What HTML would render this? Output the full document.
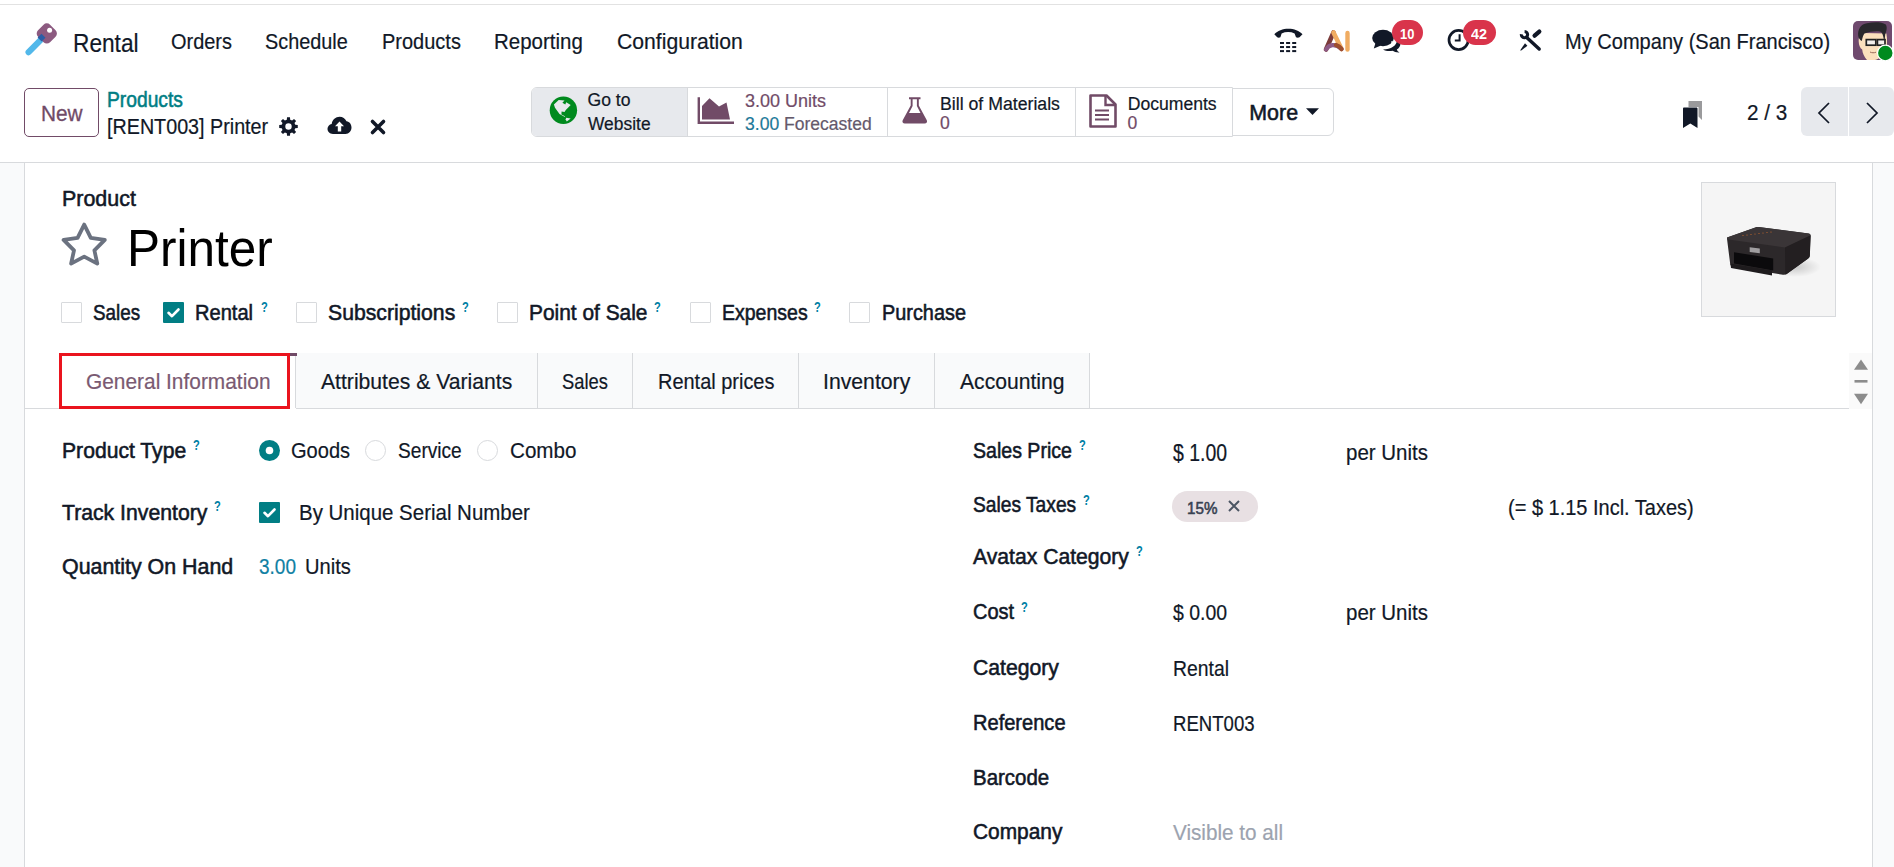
<!DOCTYPE html>
<html><head><meta charset="utf-8"><title>Printer - Rental</title>
<style>
html,body{margin:0;padding:0;background:#fff;}
body{width:1894px;height:867px;position:relative;overflow:hidden;font-family:"Liberation Sans",sans-serif;}
.t{position:absolute;white-space:pre;}
svg{overflow:visible}
</style></head><body>
<div style="position:absolute;left:0px;top:4px;width:1894px;height:1px;background:#E2E2E2"></div>
<div style="position:absolute;left:0px;top:162px;width:1894px;height:1px;background:#D8DADD"></div>
<div style="position:absolute;left:0px;top:163px;width:24px;height:704px;background:#F9FAFB"></div>
<div style="position:absolute;left:24px;top:163px;width:1px;height:704px;background:#D8DADD"></div>
<div style="position:absolute;left:1872px;top:163px;width:1px;height:704px;background:#D8DADD"></div>
<div style="position:absolute;left:1873px;top:163px;width:21px;height:704px;background:#F9FAFB"></div>
<svg style="position:absolute;left:0px;top:0px;" width="80" height="80" viewBox="0 0 80 80"><line x1="28.6" y1="52.2" x2="41" y2="39.6" stroke="#52B8EA" stroke-width="6.2" stroke-linecap="round"/><rect x="38.3" y="24.9" width="17" height="17" rx="4.6" transform="rotate(45 46.8 33.4)" fill="#8C5A80"/><path d="M37.6 37.5 L41.5 33.8 L45.5 37.8 L41.6 41.6 Z" fill="#2B5EA6"/><circle cx="49.6" cy="30.3" r="2.5" fill="#fff"/></svg>
<div class="t" style="left:72.80px;top:29.86px;font-size:26.02px;line-height:26.02px;transform:scaleX(0.8721);transform-origin:0 0;-webkit-text-stroke:0.20px #111827;color:#111827;">Rental</div>
<div class="t" style="left:171.40px;top:31.87px;font-size:21.40px;line-height:21.40px;transform:scaleX(0.9327);transform-origin:0 0;-webkit-text-stroke:0.20px #111827;color:#111827;">Orders</div>
<div class="t" style="left:265.20px;top:31.87px;font-size:21.40px;line-height:21.40px;transform:scaleX(0.9279);transform-origin:0 0;-webkit-text-stroke:0.20px #111827;color:#111827;">Schedule</div>
<div class="t" style="left:381.60px;top:31.87px;font-size:21.40px;line-height:21.40px;transform:scaleX(0.9343);transform-origin:0 0;-webkit-text-stroke:0.20px #111827;color:#111827;">Products</div>
<div class="t" style="left:494.40px;top:31.87px;font-size:21.40px;line-height:21.40px;transform:scaleX(0.9570);transform-origin:0 0;-webkit-text-stroke:0.20px #111827;color:#111827;">Reporting</div>
<div class="t" style="left:616.50px;top:31.87px;font-size:21.40px;line-height:21.40px;transform:scaleX(0.9891);transform-origin:0 0;-webkit-text-stroke:0.20px #111827;color:#111827;">Configuration</div>
<div class="t" style="left:1564.50px;top:31.57px;font-size:21.40px;line-height:21.40px;transform:scaleX(0.9370);transform-origin:0 0;-webkit-text-stroke:0.20px #111827;color:#111827;">My Company (San Francisco)</div>
<svg style="position:absolute;left:1272px;top:26px;" width="32" height="28" viewBox="0 0 32 28"><path d="M2.3 8.3 C8.5 0.8 24.3 0.8 30.5 8.3 L27.5 11.2 C26.5 11.8 25 11.8 24 11.2 L22.6 7.4 C18.6 5.6 13.6 5.6 9.6 7.4 L8.4 11.2 C7.4 11.8 6 11.8 5.2 11.2 Z" fill="#111827"/><rect x="8.0" y="16.0" width="4" height="2" fill="#111827"/><rect x="8.0" y="20.05" width="4" height="2" fill="#111827"/><rect x="8.0" y="24.1" width="4" height="2" fill="#111827"/><rect x="14.1" y="16.0" width="4" height="2" fill="#111827"/><rect x="14.1" y="20.05" width="4" height="2" fill="#111827"/><rect x="14.1" y="24.1" width="4" height="2" fill="#111827"/><rect x="20.2" y="16.0" width="4" height="2" fill="#111827"/><rect x="20.2" y="20.05" width="4" height="2" fill="#111827"/><rect x="20.2" y="24.1" width="4" height="2" fill="#111827"/></svg>
<svg style="position:absolute;left:1322px;top:29px;" width="30" height="24" viewBox="0 0 30 24"><path d="M4 20.5 L11.5 3.5" stroke="#7B3B3A" stroke-width="4.6" stroke-linecap="round"/><path d="M11.5 3.5 L19.5 20" stroke="#F0AC62" stroke-width="4.6" stroke-linecap="round"/><path d="M4 20.5 C7 15.5 13 14 19.5 20" stroke="#8E5B86" stroke-width="4.2" fill="none" stroke-linecap="round"/><path d="M14 16 C16.5 16.8 18 18 19.5 20" stroke="#9E4E2E" stroke-width="4.2" fill="none" stroke-linecap="round"/><line x1="25.5" y1="4" x2="25.5" y2="20.5" stroke="#F0AC62" stroke-width="4.4" stroke-linecap="round"/></svg>
<svg style="position:absolute;left:1370px;top:27px;" width="32" height="27" viewBox="0 0 32 27"><path d="M13 22.5 C 21 22.5 27 18.5 27 13 C 27 12 26.7 11 26.3 10.2 C 29 11.5 30.5 14 30.5 16.5 C 30.5 19 29 21.3 26.8 22.6 C 27.2 23.8 28 24.8 29.5 25.5 C 26.5 25.7 24 24.6 22.5 23.8 C 21.5 24 20.5 24.1 19.5 24.1 C 17 24.1 14.8 23.5 13 22.5 Z" fill="#111827"/><ellipse cx="13" cy="11" rx="10.8" ry="8.3" fill="#111827"/><path d="M5.5 16 L3.8 21.5 L11 18.5 Z" fill="#111827"/><path d="M22 14 C 23 17 20 20 15 21" stroke="#fff" stroke-width="1.4" fill="none"/></svg>
<svg style="position:absolute;left:1445px;top:26px;" width="28" height="28" viewBox="0 0 28 28"><circle cx="13.6" cy="14" r="9.6" fill="none" stroke="#111827" stroke-width="2.7"/><path d="M14.6 8.2 V14.6 H9.8" fill="none" stroke="#111827" stroke-width="2"/></svg>
<div style="position:absolute;left:1391.5px;top:20.2px;width:31.5px;height:25.2px;background:#D9344B;border-radius:13px"></div>
<div class="t" style="left:1400.00px;top:26.00px;font-size:15.12px;line-height:15.12px;transform:scaleX(0.8567);transform-origin:0 0;font-weight:bold;color:#fff;">10</div>
<div style="position:absolute;left:1463px;top:20.2px;width:32.7px;height:25.2px;background:#D9344B;border-radius:13px"></div>
<div class="t" style="left:1471.00px;top:26.00px;font-size:15.12px;line-height:15.12px;transform:scaleX(0.9519);transform-origin:0 0;font-weight:bold;color:#fff;">42</div>
<svg style="position:absolute;left:1514px;top:25px;" width="34" height="32" viewBox="0 0 34 32"><line x1="13" y1="12.8" x2="25.2" y2="24" stroke="#111827" stroke-width="3.4" stroke-linecap="round"/><path d="M7.4 9.2 A3.1 3.1 0 1 0 10.6 6.5" fill="none" stroke="#111827" stroke-width="3.1"/><line x1="20.6" y1="10.6" x2="25.3" y2="6.6" stroke="#111827" stroke-width="4.3" stroke-linecap="round"/><path d="M11.0 18.3 L13.4 20.7 L7.6 25.3 L6.3 25.8 L6.7 24.4 Z" fill="#111827"/></svg>
<svg style="position:absolute;left:1853px;top:21px;" width="39" height="39" viewBox="0 0 39 39"><defs><clipPath id="av"><rect width="39" height="39" rx="5"/></clipPath></defs><g clip-path="url(#av)"><rect width="39" height="39" fill="#6F4A6E"/><path d="M5.7 20.5 C5.5 16 7.5 12.5 10.5 12 L33.4 12.5 C34.5 18 34 24 33.4 28.6 C31 34 27 38 22 39 L14 39 C11 36 9.5 32 9.2 28.6 C7 27 5.8 24 5.7 20.5 Z" fill="#FBE0BD"/><path d="M5.2 15 C4.5 8 8 3 14 2.2 C20 1.2 28 0.5 32.8 3.5 C34.5 6 33.5 10 32.2 13.5 L31.5 21 C30 15 30 11.5 27 10.5 C22 10 17 10.5 11.5 12.5 C10 14 9.5 17 8.8 20 C7 19 5.8 17.5 5.2 15 Z" fill="#29282C"/><rect x="13.3" y="18.6" width="9.5" height="5.6" fill="#F4F0EC" stroke="#222" stroke-width="1.7"/><rect x="24.4" y="18.6" width="7.6" height="5.6" fill="#F4F0EC" stroke="#222" stroke-width="1.7"/><path d="M17 31 C19 32 21 32 23 31.2" stroke="#9A6A5A" stroke-width="1" fill="none"/></g><circle cx="32.3" cy="32" r="7.8" fill="#008A1E" stroke="#fff" stroke-width="1.2"/></svg>
<div style="position:absolute;left:24px;top:88px;width:75px;height:49px;box-sizing:border-box;border:1px solid #714B67;border-radius:5px"></div>
<div class="t" style="left:40.90px;top:103.87px;font-size:21.40px;line-height:21.40px;transform:scaleX(0.9728);transform-origin:0 0;-webkit-text-stroke:0.20px #714B67;color:#714B67;-webkit-text-stroke:0.3px #714B67;">New</div>
<div class="t" style="left:106.70px;top:89.77px;font-size:21.40px;line-height:21.40px;transform:scaleX(0.9000);transform-origin:0 0;-webkit-text-stroke:0.55px #017E84;color:#017E84;">Products</div>
<div class="t" style="left:107.10px;top:116.87px;font-size:21.40px;line-height:21.40px;transform:scaleX(0.9221);transform-origin:0 0;-webkit-text-stroke:0.20px #111827;color:#111827;">[RENT003] Printer</div>
<svg style="position:absolute;left:278px;top:116px;" width="21" height="21" viewBox="0 0 21 21"><path fill="#111827" fill-rule="evenodd" d="M17.29 8.81 L19.78 9.03 L19.78 11.97 L17.29 12.19 L16.50 14.11 L18.10 16.03 L16.03 18.10 L14.11 16.50 L12.19 17.29 L11.97 19.78 L9.03 19.78 L8.81 17.29 L6.89 16.50 L4.97 18.10 L2.90 16.03 L4.50 14.11 L3.71 12.19 L1.22 11.97 L1.22 9.03 L3.71 8.81 L4.50 6.89 L2.90 4.97 L4.97 2.90 L6.89 4.50 L8.81 3.71 L9.03 1.22 L11.97 1.22 L12.19 3.71 L14.11 4.50 L16.03 2.90 L18.10 4.97 L16.50 6.89 Z M7.30 10.50 a3.20 3.20 0 1 0 6.40 0 a3.20 3.20 0 1 0 -6.40 0 Z"/></svg>
<svg style="position:absolute;left:327px;top:116px;" width="25" height="19" viewBox="0 0 25 19"><path d="M6 18 C2.5 18 0.5 15.5 0.5 12.8 C0.5 10.3 2.3 8.3 4.7 7.9 C5.3 3.7 8.6 0.8 12.6 0.8 C15.7 0.8 18.3 2.6 19.5 5.3 C22.6 5.7 24.5 8.3 24.5 11.5 C24.5 15 22 18 18.5 18 Z" fill="#111827"/><path d="M12.5 5.5 L17 10.3 H14.2 V15.5 H10.8 V10.3 H8 Z" fill="#fff"/></svg>
<svg style="position:absolute;left:370px;top:119px;" width="16" height="16" viewBox="0 0 16 16"><path d="M2.5 2.5 L13.5 13.5 M13.5 2.5 L2.5 13.5" stroke="#111827" stroke-width="3.6" stroke-linecap="round"/></svg>
<div style="position:absolute;left:1232px;top:88px;width:102px;height:48px;box-sizing:border-box;border:1px solid #D8DADD;border-radius:0 6px 6px 0;background:#fff"></div>
<div style="position:absolute;left:531px;top:87px;width:702px;height:50px;box-sizing:border-box;border:1px solid #D8DADD;border-radius:6px 0 0 6px;background:#fff"></div>
<div style="position:absolute;left:532px;top:88px;width:156px;height:48px;background:#E7E9ED;border-radius:5px 0 0 5px"></div>
<div style="position:absolute;left:687px;top:88px;width:1px;height:48px;background:#D8DADD"></div>
<div style="position:absolute;left:887px;top:88px;width:1px;height:48px;background:#D8DADD"></div>
<div style="position:absolute;left:1075px;top:88px;width:1px;height:48px;background:#D8DADD"></div>
<svg style="position:absolute;left:545px;top:92px;" width="37" height="36" viewBox="0 0 37 36"><circle cx="18.4" cy="18.3" r="13.7" fill="#008A1E"/><path d="M8.9 12.5 L13.7 8.1 L19.5 8.5 L17.4 10.8 L20.3 12.5 L21.2 10.2 L25.7 12.9 L20.8 17.9 L19.5 19.9 L16.6 19.5 L16.4 22.4 L19.5 24.1 L20.3 25.2 L14.5 22 L10 15.8 Z" fill="#E7E9ED"/><path d="M21.2 25.7 L25.7 26.6 L21.8 29.5 L20.6 27.5 Z" fill="#E7E9ED"/></svg>
<div class="t" style="left:587.50px;top:92.49px;font-size:17.60px;line-height:17.60px;-webkit-text-stroke:0.20px #111827;color:#111827;">Go to</div>
<div class="t" style="left:587.50px;top:115.69px;font-size:17.60px;line-height:17.60px;transform:scaleX(0.9897);transform-origin:0 0;-webkit-text-stroke:0.20px #111827;color:#111827;">Website</div>
<svg style="position:absolute;left:697px;top:96px;" width="38" height="29" viewBox="0 0 38 29"><path d="M1.8 1.2 V26.7 H37" fill="none" stroke="#714B67" stroke-width="2.4"/><path d="M5 23.5 V10 L12.5 2.2 L22 10.5 L29.5 6.5 L33 23.5 Z" fill="#714B67"/></svg>
<div class="t" style="left:745.00px;top:92.69px;font-size:17.60px;line-height:17.60px;transform:scaleX(1.0235);transform-origin:0 0;-webkit-text-stroke:0.20px #714B67;color:#714B67;">3.00 Units</div>
<div class="t" style="left:745.00px;top:116.49px;font-size:17.60px;line-height:17.60px;transform:scaleX(0.9969);transform-origin:0 0;-webkit-text-stroke:0.20px #65596B;color:#65596B;"><span style="color:#0F7FA3">3.00</span> Forecasted</div>
<svg style="position:absolute;left:901px;top:96px;" width="28" height="29" viewBox="0 0 28 29"><path d="M8 1.2 H19.5 V3.3 H17.8 V9.5 L25.8 24.3 C26.6 26 25.6 27.6 23.7 27.6 H3.8 C1.9 27.6 0.9 26 1.7 24.3 L9.7 9.5 V3.3 H8 Z" fill="#714B67"/><path d="M11.6 3.3 H15.9 V10 L19.5 17 H8 L11.6 10 Z" fill="#fff"/></svg>
<div class="t" style="left:940.00px;top:95.79px;font-size:17.60px;line-height:17.60px;transform:scaleX(1.0056);transform-origin:0 0;-webkit-text-stroke:0.20px #111827;color:#111827;">Bill of Materials</div>
<div class="t" style="left:940.00px;top:115.39px;font-size:17.60px;line-height:17.60px;-webkit-text-stroke:0.20px #714B67;color:#714B67;">0</div>
<svg style="position:absolute;left:1088px;top:94px;" width="30" height="34" viewBox="0 0 30 34"><path d="M2.5 1.5 H18.5 L27.5 10.5 V32.5 H2.5 Z" fill="none" stroke="#714B67" stroke-width="2.6" stroke-linejoin="round"/><path d="M17.5 1.8 V11 H27" fill="none" stroke="#714B67" stroke-width="2.4"/><path d="M7 16.5 H21 M7 21 H21 M7 25.5 H21" stroke="#714B67" stroke-width="2.2"/></svg>
<div class="t" style="left:1127.70px;top:95.79px;font-size:17.60px;line-height:17.60px;-webkit-text-stroke:0.20px #111827;color:#111827;">Documents</div>
<div class="t" style="left:1127.50px;top:115.29px;font-size:17.60px;line-height:17.60px;-webkit-text-stroke:0.20px #714B67;color:#714B67;">0</div>
<div class="t" style="left:1249.30px;top:102.87px;font-size:21.40px;line-height:21.40px;-webkit-text-stroke:0.55px #111827;color:#111827;">More</div>
<svg style="position:absolute;left:1305px;top:107px;" width="15" height="9" viewBox="0 0 15 9"><path d="M1 1.2 H14 L7.5 8 Z" fill="#111827"/></svg>
<svg style="position:absolute;left:1682px;top:100px;" width="22" height="29" viewBox="0 0 22 29"><path d="M6.5 1 H20 V20 L16.5 16.5 V7 H6.5 Z" fill="#9A9A9C"/><path d="M1 8.5 C1 8 1.5 7.5 2 7.5 H14.5 C15 7.5 15.5 8 15.5 8.5 V28 L8.3 23.5 L1 28 Z" fill="#111827"/></svg>
<div class="t" style="left:1747.00px;top:103.07px;font-size:21.40px;line-height:21.40px;transform:scaleX(0.9677);transform-origin:0 0;-webkit-text-stroke:0.20px #111827;color:#111827;">2 / 3</div>
<div style="position:absolute;left:1801px;top:87px;width:93px;height:49px;background:#E7E9ED;border-radius:6px"></div>
<div style="position:absolute;left:1848px;top:87px;width:1px;height:49px;background:#fff"></div>
<svg style="position:absolute;left:1815px;top:100px;" width="18" height="26" viewBox="0 0 18 26"><path d="M14 3 L4 13 L14 23" fill="none" stroke="#111827" stroke-width="1.75"/></svg>
<svg style="position:absolute;left:1863px;top:100px;" width="18" height="26" viewBox="0 0 18 26"><path d="M4 3 L14 13 L4 23" fill="none" stroke="#111827" stroke-width="1.75"/></svg>
<div class="t" style="left:61.70px;top:188.87px;font-size:21.40px;line-height:21.40px;transform:scaleX(1.0021);transform-origin:0 0;-webkit-text-stroke:0.55px #111827;color:#111827;">Product</div>
<svg style="position:absolute;left:0px;top:0px;" width="200" height="300" viewBox="0 0 200 300"><path d="M84.2 224.6 L90.8 237.9 L104.8 239.9 L94.4 250.4 L97.3 263.6 L84.2 256.6 L71.1 263.6 L74.0 250.4 L63.6 239.9 L77.6 237.9 Z" fill="none" stroke="#6B7280" stroke-width="3.8" stroke-linejoin="round"/></svg>
<div class="t" style="left:126.60px;top:221.66px;font-size:52.47px;line-height:52.47px;transform:scaleX(0.9435);transform-origin:0 0;color:#000;">Printer</div>
<div style="position:absolute;left:61px;top:302px;width:21px;height:21px;box-sizing:border-box;border:1px solid #D8DADD;border-radius:1px;background:#fff"></div>
<div class="t" style="left:93.00px;top:303.07px;font-size:21.40px;line-height:21.40px;transform:scaleX(0.8800);transform-origin:0 0;-webkit-text-stroke:0.55px #111827;color:#111827;">Sales</div>
<div style="position:absolute;left:163px;top:302px;width:21px;height:21px;background:#017E84;border-radius:1px"></div>
<svg style="position:absolute;left:163px;top:302px;" width="21" height="21" viewBox="0 0 21 21"><path d="M5.5 10.8 L9 14.2 L15.5 7.5" fill="none" stroke="#fff" stroke-width="2.6" stroke-linecap="round" stroke-linejoin="round"/></svg>
<div class="t" style="left:195.20px;top:303.07px;font-size:21.40px;line-height:21.40px;transform:scaleX(0.9391);transform-origin:0 0;-webkit-text-stroke:0.55px #111827;color:#111827;">Rental</div>
<div class="t" style="left:260.80px;top:299.92px;font-size:14.50px;line-height:14.50px;transform:scaleX(0.7675);transform-origin:0 0;font-weight:bold;color:#0180A5;">?</div>
<div style="position:absolute;left:296px;top:302px;width:21px;height:21px;box-sizing:border-box;border:1px solid #D8DADD;border-radius:1px;background:#fff"></div>
<div class="t" style="left:328.00px;top:303.07px;font-size:21.40px;line-height:21.40px;transform:scaleX(0.9909);transform-origin:0 0;-webkit-text-stroke:0.55px #111827;color:#111827;">Subscriptions</div>
<div class="t" style="left:461.70px;top:299.92px;font-size:14.50px;line-height:14.50px;transform:scaleX(0.7675);transform-origin:0 0;font-weight:bold;color:#0180A5;">?</div>
<div style="position:absolute;left:497px;top:302px;width:21px;height:21px;box-sizing:border-box;border:1px solid #D8DADD;border-radius:1px;background:#fff"></div>
<div class="t" style="left:529.30px;top:303.07px;font-size:21.40px;line-height:21.40px;transform:scaleX(0.9766);transform-origin:0 0;-webkit-text-stroke:0.55px #111827;color:#111827;">Point of Sale</div>
<div class="t" style="left:654.40px;top:299.92px;font-size:14.50px;line-height:14.50px;transform:scaleX(0.7675);transform-origin:0 0;font-weight:bold;color:#0180A5;">?</div>
<div style="position:absolute;left:690px;top:302px;width:21px;height:21px;box-sizing:border-box;border:1px solid #D8DADD;border-radius:1px;background:#fff"></div>
<div class="t" style="left:722.00px;top:303.07px;font-size:21.40px;line-height:21.40px;transform:scaleX(0.9118);transform-origin:0 0;-webkit-text-stroke:0.55px #111827;color:#111827;">Expenses</div>
<div class="t" style="left:814.10px;top:299.92px;font-size:14.50px;line-height:14.50px;transform:scaleX(0.7675);transform-origin:0 0;font-weight:bold;color:#0180A5;">?</div>
<div style="position:absolute;left:849px;top:302px;width:21px;height:21px;box-sizing:border-box;border:1px solid #D8DADD;border-radius:1px;background:#fff"></div>
<div class="t" style="left:881.50px;top:303.07px;font-size:21.40px;line-height:21.40px;transform:scaleX(0.9290);transform-origin:0 0;-webkit-text-stroke:0.55px #111827;color:#111827;">Purchase</div>
<div style="position:absolute;left:1701px;top:182px;width:135px;height:135px;box-sizing:border-box;border:1px solid #D8DADD;background:#F5F5F5"></div>
<svg style="position:absolute;left:1715px;top:215px;" width="110" height="70" viewBox="0 0 110 70"><defs><radialGradient id="sh" cx="0.5" cy="0.5" r="0.5"><stop offset="0" stop-color="#000" stop-opacity="0.18"/><stop offset="1" stop-color="#000" stop-opacity="0"/></radialGradient></defs><ellipse cx="80" cy="52" rx="26" ry="10" fill="url(#sh)"/><path d="M12.1 22.6 L40.4 12.5 C41.5 12.1 42.5 12 43.5 12.1 L93.5 18.5 C95 18.8 95.8 19.8 95.8 21 L94.8 40.5 C94.7 42 94 43 92.5 44 L72 58.8 C71 59.6 69.5 60 68 59.8 L17.5 51.5 C16 51.2 15.3 50.3 15.2 49 L12.1 24.5 C12 23.6 12 23 12.1 22.6 Z" fill="#2C282A"/><path d="M12.1 22.6 L40.4 12.5 C41.5 12.1 42.5 12 43.5 12.1 L93.5 18.5 C95 18.8 95.8 19.8 95.3 20.5 L70 32.5 L13.5 24.5 C12.5 24.3 12 23.5 12.1 22.6 Z" fill="#3A3537"/><path d="M70 32.5 L95.3 20.5 L94.8 40.5 C94.7 42 94 43 92.5 44 L72 58.8 C71 59.6 70.5 59.6 70.3 59 Z" fill="#231F21"/><path d="M19 37.2 L58.2 43.5 L58.2 55.5 L19 48.5 Z" fill="#0B0A0C"/><path d="M15.5 48.5 L57 55.5 L57 60.5 L16 53 Z" fill="#1E1B1D"/><path d="M34.7 32.3 L44.8 33.6 L44.8 38.2 L34.7 37 Z" fill="#A09EA0"/><circle cx="28.0" cy="20.5" r="0.6" fill="#C86A2A"/><circle cx="32.0" cy="20.0" r="0.6" fill="#C86A2A"/><circle cx="36.0" cy="19.5" r="0.6" fill="#C86A2A"/><circle cx="40.0" cy="19.0" r="0.6" fill="#C86A2A"/><circle cx="44.0" cy="18.5" r="0.6" fill="#C86A2A"/><circle cx="48.0" cy="18.0" r="0.6" fill="#C86A2A"/><circle cx="52.0" cy="17.5" r="0.6" fill="#C86A2A"/><circle cx="56.0" cy="17.0" r="0.6" fill="#C86A2A"/></svg>
<div style="position:absolute;left:25px;top:408px;width:1825px;height:1px;background:#D8DADD"></div>
<div style="position:absolute;left:59px;top:353px;width:237px;height:56px;background:#fff"></div>
<div style="position:absolute;left:296px;top:353px;width:794px;height:55px;background:#F9FAFB"></div>
<div style="position:absolute;left:295px;top:353px;width:1px;height:55px;background:#D8DADD"></div>
<div style="position:absolute;left:537px;top:353px;width:1px;height:55px;background:#D8DADD"></div>
<div style="position:absolute;left:632px;top:353px;width:1px;height:55px;background:#D8DADD"></div>
<div style="position:absolute;left:798px;top:353px;width:1px;height:55px;background:#D8DADD"></div>
<div style="position:absolute;left:934px;top:353px;width:1px;height:55px;background:#D8DADD"></div>
<div style="position:absolute;left:1089px;top:353px;width:1px;height:55px;background:#D8DADD"></div>
<div style="position:absolute;left:59px;top:353px;width:238px;height:3px;background:#714B67"></div>
<div class="t" style="left:86.40px;top:371.87px;font-size:21.40px;line-height:21.40px;transform:scaleX(0.9760);transform-origin:0 0;-webkit-text-stroke:0.20px #7A5A72;color:#7A5A72;">General Information</div>
<div class="t" style="left:321.40px;top:371.87px;font-size:21.40px;line-height:21.40px;transform:scaleX(0.9887);transform-origin:0 0;-webkit-text-stroke:0.20px #111827;color:#111827;">Attributes &amp; Variants</div>
<div class="t" style="left:562.20px;top:371.87px;font-size:21.40px;line-height:21.40px;transform:scaleX(0.8595);transform-origin:0 0;-webkit-text-stroke:0.20px #111827;color:#111827;">Sales</div>
<div class="t" style="left:657.90px;top:371.87px;font-size:21.40px;line-height:21.40px;transform:scaleX(0.9328);transform-origin:0 0;-webkit-text-stroke:0.20px #111827;color:#111827;">Rental prices</div>
<div class="t" style="left:823.40px;top:371.87px;font-size:21.40px;line-height:21.40px;transform:scaleX(0.9918);transform-origin:0 0;-webkit-text-stroke:0.20px #111827;color:#111827;">Inventory</div>
<div class="t" style="left:959.70px;top:371.87px;font-size:21.40px;line-height:21.40px;transform:scaleX(0.9869);transform-origin:0 0;-webkit-text-stroke:0.20px #111827;color:#111827;">Accounting</div>
<div style="position:absolute;left:59px;top:353px;width:231px;height:56px;box-sizing:border-box;border:3px solid #EA141E"></div>
<div style="position:absolute;left:1849px;top:353px;width:23px;height:56px;background:#FAFAFA"></div>
<svg style="position:absolute;left:1852px;top:358px;" width="18" height="48" viewBox="0 0 18 48"><path d="M9 1.5 L16 11.8 H2 Z" fill="#8C8C8C"/><rect x="2.5" y="22" width="13" height="2.6" fill="#8C8C8C"/><path d="M2 35.8 H16 L9 46.2 Z" fill="#8C8C8C"/></svg>
<div class="t" style="left:62.00px;top:440.87px;font-size:21.40px;line-height:21.40px;transform:scaleX(0.9880);transform-origin:0 0;-webkit-text-stroke:0.55px #111827;color:#111827;">Product Type</div>
<div class="t" style="left:192.90px;top:437.92px;font-size:14.50px;line-height:14.50px;transform:scaleX(0.7675);transform-origin:0 0;font-weight:bold;color:#0180A5;">?</div>
<svg style="position:absolute;left:259px;top:440px;" width="21" height="21" viewBox="0 0 21 21"><circle cx="10.5" cy="10.5" r="10.5" fill="#017E84"/><circle cx="10.5" cy="10.5" r="3.8" fill="#fff"/></svg>
<div class="t" style="left:290.70px;top:440.97px;font-size:21.40px;line-height:21.40px;transform:scaleX(0.9374);transform-origin:0 0;-webkit-text-stroke:0.20px #111827;color:#111827;">Goods</div>
<svg style="position:absolute;left:365px;top:440px;" width="21" height="21" viewBox="0 0 21 21"><circle cx="10.5" cy="10.5" r="10" fill="#fff" stroke="#D8DADD" stroke-width="1"/></svg>
<div class="t" style="left:397.80px;top:440.97px;font-size:21.40px;line-height:21.40px;transform:scaleX(0.8939);transform-origin:0 0;-webkit-text-stroke:0.20px #111827;color:#111827;">Service</div>
<svg style="position:absolute;left:477px;top:440px;" width="21" height="21" viewBox="0 0 21 21"><circle cx="10.5" cy="10.5" r="10" fill="#fff" stroke="#D8DADD" stroke-width="1"/></svg>
<div class="t" style="left:509.70px;top:440.97px;font-size:21.40px;line-height:21.40px;transform:scaleX(0.9639);transform-origin:0 0;-webkit-text-stroke:0.20px #111827;color:#111827;">Combo</div>
<div class="t" style="left:62.00px;top:502.77px;font-size:21.40px;line-height:21.40px;transform:scaleX(0.9913);transform-origin:0 0;-webkit-text-stroke:0.55px #111827;color:#111827;">Track Inventory</div>
<div class="t" style="left:214.20px;top:499.32px;font-size:14.50px;line-height:14.50px;transform:scaleX(0.7675);transform-origin:0 0;font-weight:bold;color:#0180A5;">?</div>
<div style="position:absolute;left:259px;top:502px;width:21px;height:21px;background:#017E84;border-radius:1px"></div>
<svg style="position:absolute;left:259px;top:502px;" width="21" height="21" viewBox="0 0 21 21"><path d="M5.5 10.8 L9 14.2 L15.5 7.5" fill="none" stroke="#fff" stroke-width="2.6" stroke-linecap="round" stroke-linejoin="round"/></svg>
<div class="t" style="left:299.00px;top:503.47px;font-size:21.40px;line-height:21.40px;transform:scaleX(0.9567);transform-origin:0 0;-webkit-text-stroke:0.20px #111827;color:#111827;">By Unique Serial Number</div>
<div class="t" style="left:62.00px;top:556.87px;font-size:21.40px;line-height:21.40px;-webkit-text-stroke:0.55px #111827;color:#111827;">Quantity On Hand</div>
<div class="t" style="left:259.20px;top:557.37px;font-size:21.40px;line-height:21.40px;transform:scaleX(0.8885);transform-origin:0 0;-webkit-text-stroke:0.20px #0F7FA3;color:#0F7FA3;">3.00</div>
<div class="t" style="left:305.40px;top:557.37px;font-size:21.40px;line-height:21.40px;transform:scaleX(0.9416);transform-origin:0 0;-webkit-text-stroke:0.20px #111827;color:#111827;">Units</div>
<div class="t" style="left:973.20px;top:440.57px;font-size:21.40px;line-height:21.40px;transform:scaleX(0.9146);transform-origin:0 0;-webkit-text-stroke:0.55px #111827;color:#111827;">Sales Price</div>
<div class="t" style="left:1079.40px;top:437.82px;font-size:14.50px;line-height:14.50px;transform:scaleX(0.7675);transform-origin:0 0;font-weight:bold;color:#0180A5;">?</div>
<div class="t" style="left:1173.30px;top:441.83px;font-size:23.11px;line-height:23.11px;transform:scaleX(0.8421);transform-origin:0 0;-webkit-text-stroke:0.20px #111827;color:#111827;">$ 1.00</div>
<div class="t" style="left:1346.00px;top:443.27px;font-size:21.40px;line-height:21.40px;transform:scaleX(0.9577);transform-origin:0 0;-webkit-text-stroke:0.20px #111827;color:#111827;">per Units</div>
<div class="t" style="left:973.00px;top:495.47px;font-size:21.40px;line-height:21.40px;transform:scaleX(0.8974);transform-origin:0 0;-webkit-text-stroke:0.55px #111827;color:#111827;">Sales Taxes</div>
<div class="t" style="left:1083.40px;top:492.82px;font-size:14.50px;line-height:14.50px;transform:scaleX(0.7675);transform-origin:0 0;font-weight:bold;color:#0180A5;">?</div>
<div style="position:absolute;left:1172px;top:491px;width:86px;height:31px;background:#E8E0E3;border-radius:16px"></div>
<div class="t" style="left:1187.00px;top:501.46px;font-size:15.99px;line-height:15.99px;transform:scaleX(0.9502);transform-origin:0 0;-webkit-text-stroke:0.55px #374151;color:#374151;">15%</div>
<svg style="position:absolute;left:1226px;top:498px;" width="16" height="16" viewBox="0 0 16 16"><path d="M3 3 L13 13 M13 3 L3 13" stroke="#4B5563" stroke-width="2"/></svg>
<div class="t" style="left:1507.70px;top:497.67px;font-size:21.40px;line-height:21.40px;transform:scaleX(0.9344);transform-origin:0 0;-webkit-text-stroke:0.20px #111827;color:#111827;">(= $ 1.15 Incl. Taxes)</div>
<div class="t" style="left:973.00px;top:547.47px;font-size:21.40px;line-height:21.40px;transform:scaleX(0.9884);transform-origin:0 0;-webkit-text-stroke:0.55px #111827;color:#111827;">Avatax Category</div>
<div class="t" style="left:1135.70px;top:544.32px;font-size:14.50px;line-height:14.50px;transform:scaleX(0.7675);transform-origin:0 0;font-weight:bold;color:#0180A5;">?</div>
<div class="t" style="left:973.00px;top:602.37px;font-size:21.40px;line-height:21.40px;transform:scaleX(0.9341);transform-origin:0 0;-webkit-text-stroke:0.55px #111827;color:#111827;">Cost</div>
<div class="t" style="left:1021.40px;top:599.82px;font-size:14.50px;line-height:14.50px;transform:scaleX(0.7675);transform-origin:0 0;font-weight:bold;color:#0180A5;">?</div>
<div class="t" style="left:1173.30px;top:603.47px;font-size:21.40px;line-height:21.40px;transform:scaleX(0.9094);transform-origin:0 0;-webkit-text-stroke:0.20px #111827;color:#111827;">$ 0.00</div>
<div class="t" style="left:1346.00px;top:603.47px;font-size:21.40px;line-height:21.40px;transform:scaleX(0.9577);transform-origin:0 0;-webkit-text-stroke:0.20px #111827;color:#111827;">per Units</div>
<div class="t" style="left:973.00px;top:657.97px;font-size:21.40px;line-height:21.40px;transform:scaleX(0.9903);transform-origin:0 0;-webkit-text-stroke:0.55px #111827;color:#111827;">Category</div>
<div class="t" style="left:1173.30px;top:659.07px;font-size:21.40px;line-height:21.40px;transform:scaleX(0.9052);transform-origin:0 0;-webkit-text-stroke:0.20px #111827;color:#111827;">Rental</div>
<div class="t" style="left:973.00px;top:713.17px;font-size:21.40px;line-height:21.40px;transform:scaleX(0.9378);transform-origin:0 0;-webkit-text-stroke:0.55px #111827;color:#111827;">Reference</div>
<div class="t" style="left:1173.30px;top:713.87px;font-size:21.40px;line-height:21.40px;transform:scaleX(0.8684);transform-origin:0 0;-webkit-text-stroke:0.20px #111827;color:#111827;">RENT003</div>
<div class="t" style="left:973.00px;top:767.57px;font-size:21.40px;line-height:21.40px;transform:scaleX(0.9559);transform-origin:0 0;-webkit-text-stroke:0.55px #111827;color:#111827;">Barcode</div>
<div class="t" style="left:973.00px;top:822.17px;font-size:21.40px;line-height:21.40px;transform:scaleX(0.9761);transform-origin:0 0;-webkit-text-stroke:0.55px #111827;color:#111827;">Company</div>
<div class="t" style="left:1173.30px;top:823.47px;font-size:21.40px;line-height:21.40px;transform:scaleX(0.9674);transform-origin:0 0;-webkit-text-stroke:0.20px #9CA3AF;color:#9CA3AF;">Visible to all</div>
</body></html>
